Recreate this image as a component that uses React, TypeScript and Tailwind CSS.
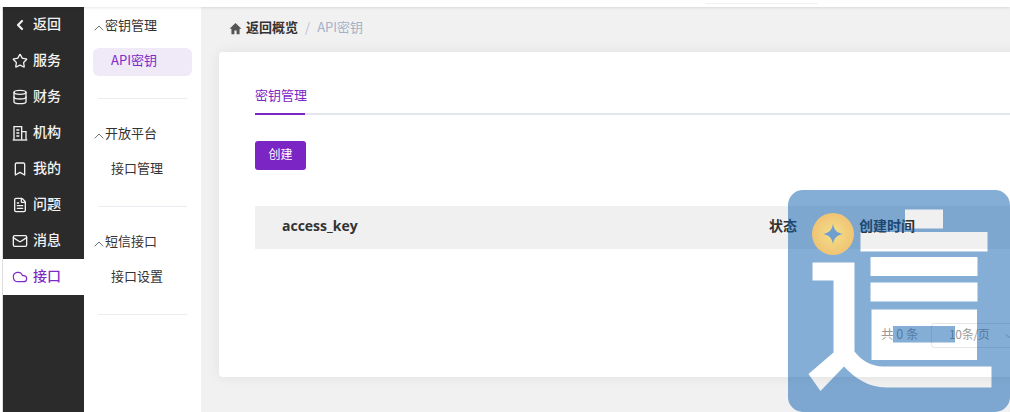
import React from 'react';
import {
  Bookmark,
  ChevronDown,
  ChevronLeft,
  ChevronUp,
  Cloud,
  Database,
  FileText,
  Mail,
  Star,
} from 'lucide-react';

const OrgIcon: React.FC<{ className?: string; strokeWidth?: number }> = ({ className, strokeWidth }) => (
  <svg viewBox="0 0 24 24" fill="none" stroke="currentColor" strokeWidth={strokeWidth} className={className}>
    <path d="M1 22.5H23" />
    <path d="M3 22V2.5H14.5V22" />
    <path d="M14.5 10H21V22" />
    <path d="M6.5 7.5H11M6.5 12H11M6.5 16.5H11" />
  </svg>
);

const navItems = [
  { label: '返回', icon: ChevronLeft, stroke: 3.2 },
  { label: '服务', icon: Star, stroke: 2 },
  { label: '财务', icon: Database, stroke: 2 },
  { label: '机构', icon: OrgIcon, stroke: 2 },
  { label: '我的', icon: Bookmark, stroke: 2 },
  { label: '问题', icon: FileText, stroke: 2 },
  { label: '消息', icon: Mail, stroke: 2 },
  { label: '接口', icon: Cloud, stroke: 1.8, active: true },
];

const menuGroups = [
  { title: '密钥管理', items: [{ label: 'API密钥', active: true }] },
  { title: '开放平台', items: [{ label: '接口管理' }] },
  { title: '短信接口', items: [{ label: '接口设置' }] },
];

const SideNav: React.FC = () => (
  <div className="w-[81px] shrink-0 bg-[#2b2b2b] text-[14px] font-medium">
    {navItems.map((item) => {
      const Icon = item.icon;
      return (
        <div
          key={item.label}
          className={
            item.active
              ? 'flex h-9 items-center gap-[5px] bg-white pl-[9px] text-[#7e2bc8]'
              : 'flex h-9 items-center gap-[5px] pl-[9px] text-[#f2f2f2]'
          }
        >
          <Icon className="h-4 w-4 shrink-0" strokeWidth={item.stroke} />
          <span className="pb-1">{item.label}</span>
        </div>
      );
    })}
  </div>
);

const SubMenu: React.FC = () => (
  <div className="w-[117px] shrink-0 bg-white pt-px text-[13px] text-[#333333]">
    {menuGroups.map((group) => (
      <div key={group.title}>
        <div className="flex h-9 items-center pl-[7px]">
          <ChevronUp className="-mr-[2px] mt-[3px] h-4 w-4 shrink-0 text-[#777777]" strokeWidth={1.5} />
          <span className="pb-[2px]">{group.title}</span>
        </div>
        <div className="mt-1">
          {group.items.map((item) => (
            <div
              key={item.label}
              className={
                item.active
                  ? 'mx-[9px] flex h-7 items-center rounded-md bg-[#f0e9f8] pb-1 pl-[18px] text-[#7e2bc8]'
                  : 'mx-[9px] flex h-7 items-center pb-1 pl-[18px]'
              }
            >
              {item.label}
            </div>
          ))}
        </div>
        <div className="mx-[14px] mb-[17px] mt-[22px] h-px bg-[#ececf3]" />
      </div>
    ))}
  </div>
);

const Card: React.FC = () => (
  <div className="ml-[18px] mt-[3px] h-[325px] w-[850px] rounded bg-white pl-9 pt-[33px] shadow-[0_0_14px_rgba(0,0,0,0.07)]">
    <div className="border-b-2 border-[#e4e6ef]">
      <div className="-mb-[2px] w-[50px] border-b-2 border-[#7b26c4] pb-[8px] text-[13px] leading-5 text-[#7b26c4] whitespace-nowrap">
        密钥管理
      </div>
    </div>
    <button className="mt-[26px] flex h-[29px] w-[51px] items-center justify-center rounded-[3px] bg-[#7b26c4] pb-[3px] text-[12px] text-white">
      创建
    </button>
    <div className="mt-9 flex h-[43px] items-center bg-[#f0f0f0] pb-1 pl-[27px] text-[14px] font-bold text-[#333333]">
      <div className="w-[488px] font-['Open_Sans','Noto_Sans_CJK_SC',sans-serif]">access_key</div>
      <div className="-ml-px w-[90px]">状态</div>
      <div>创建时间</div>
    </div>
    <div className="ml-[626px] mt-[74px] flex h-[25px] items-center text-[#9a9a9a]">
      <span className="w-[50px] whitespace-nowrap pb-[3px] text-[12.5px]">共 0 条</span>
      <div className="flex h-[25px] w-[100px] items-center rounded-[3px] border border-[#e6e6e6] pl-[17px]">
        <span className="whitespace-nowrap pb-[3px] text-[12px] tracking-[-0.3px]">10条/页</span>
        <ChevronDown className="ml-[13px] h-[12px] w-[12px] shrink-0" strokeWidth={1.5} />
      </div>
    </div>
  </div>
);

// floating badge, the white strokes of the logo are cut out of the blue square
const FloatLogo: React.FC = () => (
  <div className="absolute bottom-0 right-0 h-[222px] w-[222px]">
    <svg viewBox="0 0 222 222" className="h-full w-full">
      <path
        fill="#095dad"
        fillOpacity={0.5}
        fillRule="evenodd"
        d="M15 0H207A15 15 0 0 1 222 15V207A15 15 0 0 1 207 222H15A15 15 0 0 1 0 207V15A15 15 0 0 1 15 0Z
           M117 19.5H155V38.5H117Z
           M72.5 42H199.5V61.5H72.5Z
           M82.5 67H189.5V86H82.5Z
           M82.5 92.5H189.5V111.5H82.5Z
           M83.5 119.5H189V170H83.5Z
           M24.5 72.5H66.5V161.5C73 170 83 176.5 95.5 176.5H203.5V197.5H98.5C80 197.5 67 188 56 176.5L32.5 201L20.5 184L45.5 162.5V90.5H24.5Z"
      />
      <path fill="#095dad" fillOpacity={0.5} d="M105 136H167V152.5H105Z" />
    </svg>
    <div className="absolute left-6 top-[23px] flex h-[42px] w-[42px] items-center justify-center rounded-full bg-[radial-gradient(circle,#f4df88,#eeb96c)]">
      <svg viewBox="0 0 20 20" className="h-5 w-5">
        <path fill="#6f9fd0" d="M10 0C11 6 14 9 20 10C14 11 11 14 10 20C9 14 6 11 0 10C6 9 9 6 10 0Z" />
      </svg>
    </div>
  </div>
);

const App: React.FC = () => {
  return (
    <div className="relative flex h-[412px] w-[1010px] flex-col overflow-hidden bg-white font-['Noto_Sans_CJK_SC','Noto_Sans',sans-serif]">
      <div className="relative z-10 h-[7px] shrink-0 bg-white shadow-[0_1px_3px_rgba(0,0,0,0.1)]">
        <div className="ml-[705px] h-[4px] w-[113px] border-b border-[#f1f1f1]" />
      </div>
      <div className="flex min-h-0 flex-1">
        <div className="w-[3px] shrink-0 border-r border-[#dddddd] bg-white" />
        <SideNav />
        <SubMenu />
        <div className="min-w-0 flex-1 bg-[#f1f1f2]">
          <div className="flex h-[42px] items-center gap-1 pl-7 text-[13px]">
            <svg viewBox="0 0 24 24" className="h-[13px] w-[13px] fill-[#555555]">
              <path d="M12 2L1 12.5H4.5V22.5H10V15.5H14V22.5H19.5V12.5H23Z" />
            </svg>
            <span className="pb-[3px] font-semibold text-[#333333]">返回概览</span>
            <span className="mx-[3px] pb-[3px] text-[#b8c0cc]">/</span>
            <span className="pb-[3px] text-[#a5b1c6]">API密钥</span>
          </div>
          <Card />
        </div>
      </div>
      <FloatLogo />
    </div>
  );
};

export default App;
